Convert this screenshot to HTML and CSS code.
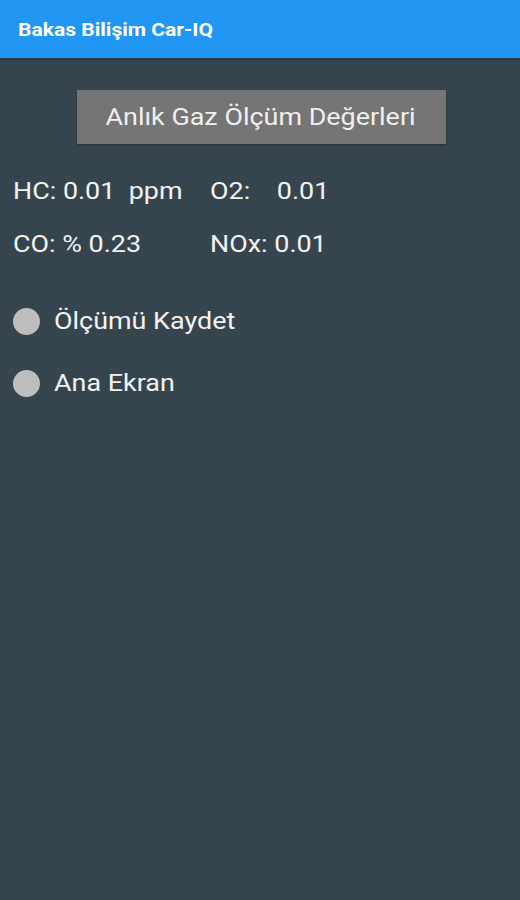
FILE: index.html
```html
<!DOCTYPE html>
<html lang="tr">

<head>
  <meta charset="UTF-8">
  <meta name="viewport" content="width=device-width, initial-scale=1.0">
  <title>Bakas Bilişim Car-IQ</title>
  <link rel="stylesheet" href="styles.css">
</head>

<body>
  <header class="appbar">
    <h1 class="wide">Bakas Bilişim Car-IQ</h1>
  </header>

  <main class="content">
    <div class="actions">
      <button class="btn"><span class="wide wide-center">Anlık Gaz Ölçüm Değerleri</span></button>
    </div>

    <div class="values">
      <div class="value-row">
        <span class="cell cell-left"><span class="wide">HC: 0.01&nbsp;&nbsp;ppm</span></span>
        <span class="cell"><span class="wide">O2:&nbsp;&nbsp;&nbsp;&nbsp;0.01</span></span>
      </div>
      <div class="value-row">
        <span class="cell cell-left"><span class="wide">CO: % 0.23</span></span>
        <span class="cell"><span class="wide">NOx: 0.01</span></span>
      </div>
    </div>

    <ul class="options">
      <li class="option"><span class="radio"></span><span class="wide">Ölçümü Kaydet</span></li>
      <li class="option"><span class="radio"></span><span class="wide">Ana Ekran</span></li>
    </ul>
  </main>
</body>

</html>
```

FILE: styles.css
```css
html,
body {
  height: 100%;
}

body {
  margin: 0;
  background: #36454d;
  font-family: Roboto, "Noto Sans", sans-serif;
  color: #f2f2f2;
}

/* the screen is drawn a bit wider than the font */
.wide {
  display: inline-block;
  transform: scaleX(1.17);
  transform-origin: left center;
  white-space: nowrap;
}

.wide-center {
  transform-origin: center;
}

.appbar {
  display: flex;
  align-items: center;
  height: 58px;
  padding: 0 18px;
  background: #2196f3;
  border-bottom: 2px solid #2b3a42;
}

.appbar h1 {
  margin: 0;
  font-size: 18px;
  font-weight: 700;
  color: #fff;
}

.content {
  padding: 30px 13px 0;
}

.actions {
  display: flex;
  justify-content: center;
  padding-left: 2px;
}

.btn {
  width: 369px;
  height: 54px;
  border: none;
  background: #757575;
  color: #f0f0f0;
  font-family: inherit;
  font-size: 23px;
  box-shadow: 0 1px 2px rgba(0, 0, 0, 0.3);
}

.values {
  margin-top: 21px;
}

.value-row {
  display: flex;
  height: 53px;
  align-items: center;
  font-size: 23px;
}

.cell-left {
  width: 197px;
}

.options {
  list-style: none;
  margin: 19px 0 0;
  padding: 0;
}

.option {
  display: flex;
  align-items: center;
  gap: 14px;
  height: 62px;
  font-size: 23px;
}

.radio {
  width: 27px;
  height: 27px;
  border-radius: 50%;
  background: #bdbdbd;
}
```
